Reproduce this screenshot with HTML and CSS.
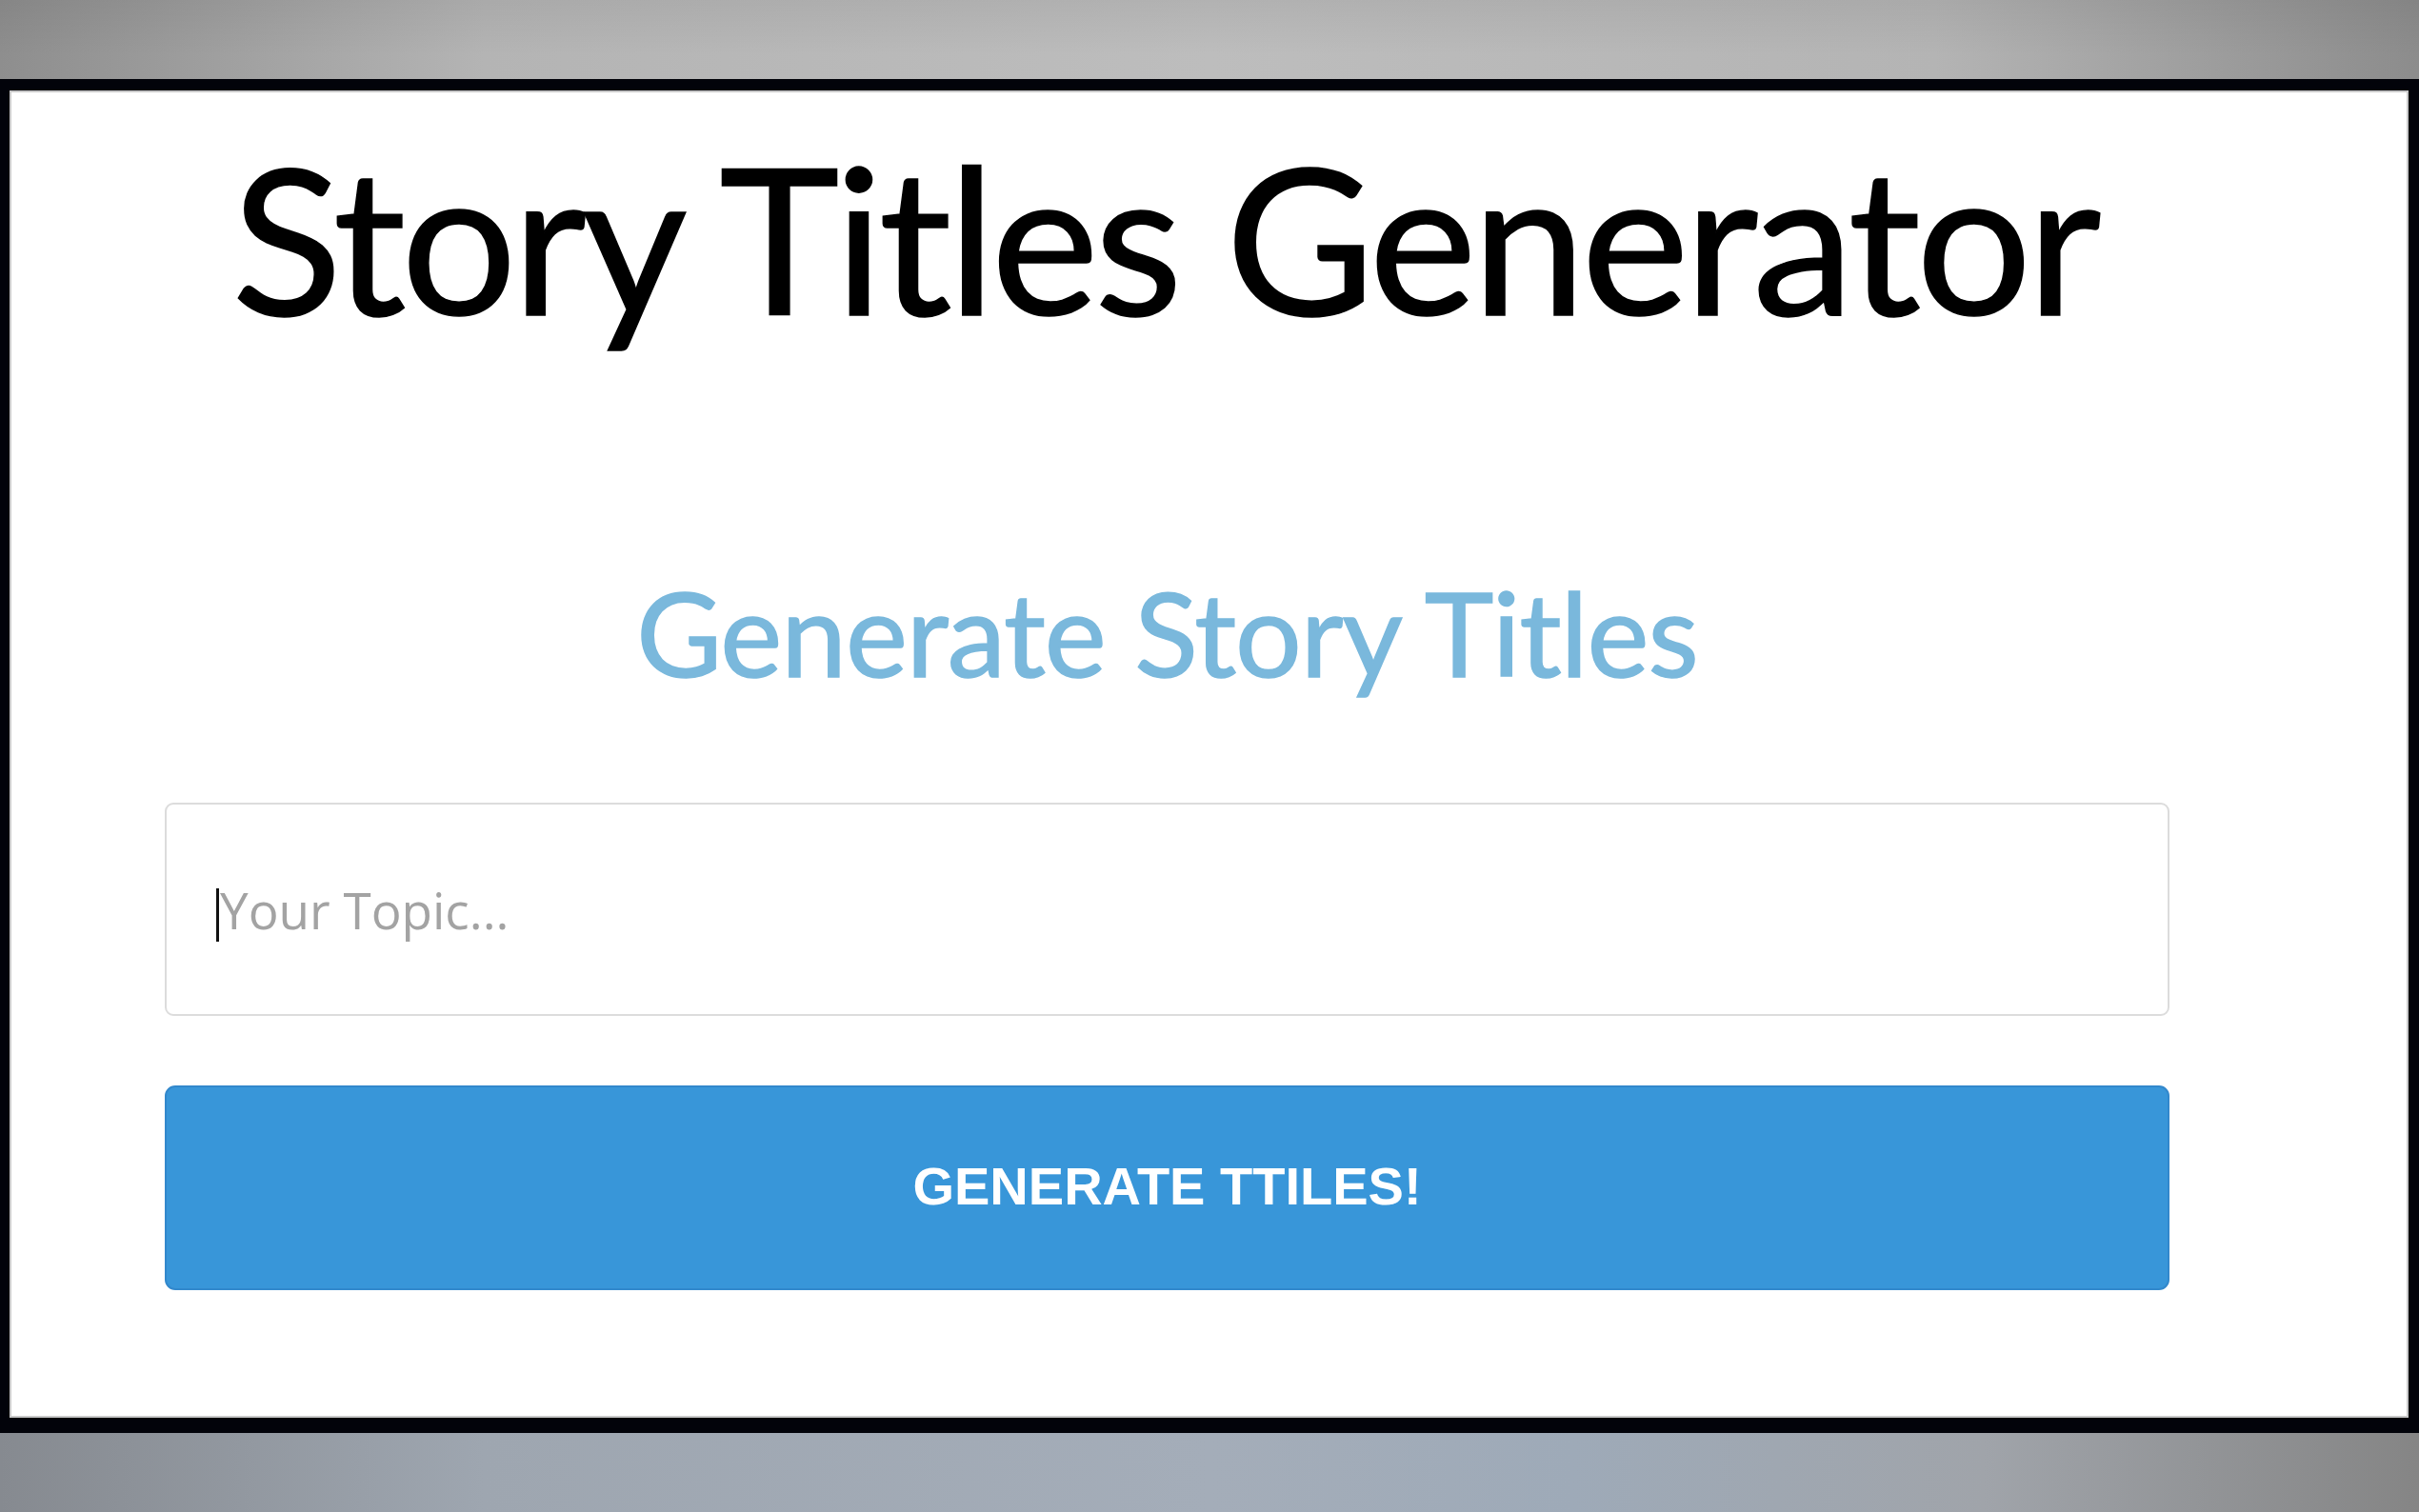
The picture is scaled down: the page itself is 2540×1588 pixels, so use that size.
FILE: index.html
```html
<!DOCTYPE html>
<html lang="en">
<head>
<meta charset="utf-8">
<title>Story Titles Generator</title>
<link rel="stylesheet" href="styles.css">
</head>
<body>
<div class="band band-top"></div>
<div class="frame">
  <div class="content">
    <h1 class="title">Story Titles Generator</h1>
    <h2 class="subtitle">Generate Story Titles</h2>
    <div class="field">
      <span class="caret"></span>
      <input class="topic" type="text" placeholder="Your Topic...">
    </div>
    <button class="generate" type="button">GENERATE TTILES!</button>
  </div>
</div>
<div class="band band-bottom"></div>
</body>
</html>
```
FILE: styles.css
```css
html, body {
  margin: 0;
  padding: 0;
}
body {
  width: 2540px;
  height: 1588px;
  overflow: hidden;
  background: #9aa3ad;
  font-family: "Lato", "Liberation Sans", sans-serif;
}
.band {
  height: 83px;
}
.band-top {
  background:
    linear-gradient(to bottom, rgba(0,0,0,0.06), rgba(0,0,0,0) 70%),
    linear-gradient(to right, #8e8e8e 0%, #b4b4b4 20%, #bdbdbd 50%, #b4b4b4 80%, #8c8c8c 100%);
}
.band-bottom {
  background: linear-gradient(to right, #868a90 0%, #9ea6b0 20%, #a4adb9 50%, #9eaab8 65%, #a0a4aa 82%, #858585 100%);
}
.frame {
  height: 1394px;
  border-style: solid;
  border-color: #02030a;
  border-width: 12px 11px 16px 10px;
  background: #ffffff;
  box-shadow: inset 0 0 0 2px #c9c9c9;
}
.content {
  width: 2105px;
  margin-left: 163px;
  display: flex;
  flex-direction: column;
  align-items: center;
}
.title {
  margin: 26px 0 0 -6px;
  font-family: "Lato", sans-serif;
  font-weight: 400;
  font-size: 214px;
  letter-spacing: -4.7px;
  -webkit-text-stroke: 1.5px #000;
  line-height: 1.2;
  color: #000;
  white-space: nowrap;
}
.subtitle {
  margin: 212px 0 0 0;
  font-family: "Lato", sans-serif;
  font-weight: 400;
  font-size: 123px;
  letter-spacing: -1px;
  -webkit-text-stroke: 1.5px #7ab8dc;
  line-height: 1.2;
  color: #7ab8dc;
  white-space: nowrap;
}
.field {
  position: relative;
  margin-top: 106px;
  width: 100%;
}
.topic {
  display: block;
  box-sizing: border-box;
  width: 100%;
  height: 224px;
  margin: 0;
  padding: 0 0 0 56px;
  border: 2px solid #dcdcdc;
  border-radius: 9px;
  background: #fff;
  font-family: "Open Sans", sans-serif;
  font-size: 53px;
  color: #333;
  outline: none;
}
.topic::placeholder {
  color: #a3a3a3;
}
.caret {
  position: absolute;
  left: 54px;
  top: 90px;
  width: 3px;
  height: 56px;
  background: #111;
}
.generate {
  margin-top: 73px;
  width: 100%;
  height: 215px;
  border: 2px solid #3288cc;
  border-radius: 11px;
  background: #3896d9;
  color: #fff;
  font-family: "Liberation Sans", Arial, sans-serif;
  font-weight: 700;
  font-size: 56px;
  padding: 0 0 4px 0;
  cursor: pointer;
}
```
